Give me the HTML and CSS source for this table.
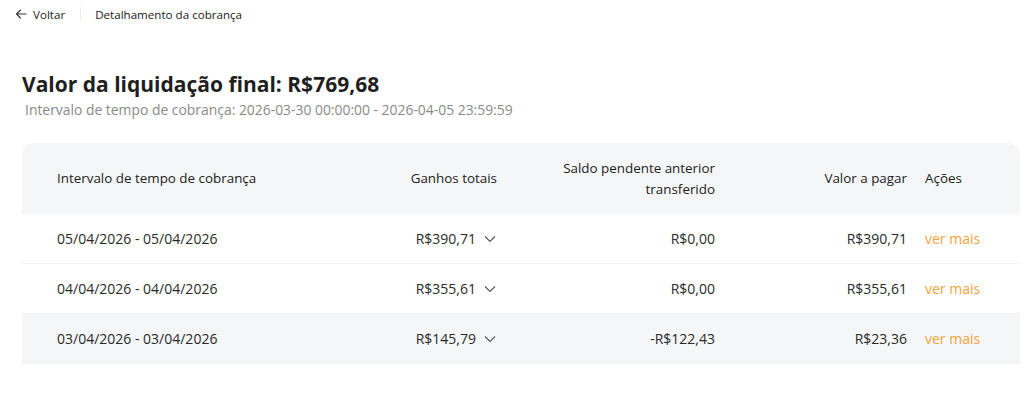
FILE: index.html
```html
<!DOCTYPE html>
<html lang="pt-BR">
<head>
<meta charset="utf-8">
<title>Detalhamento da cobrança</title>
<link rel="stylesheet" href="styles.css">
</head>
<body>
<nav class="topbar">
  <a class="back" href="#">
    <svg class="back-icon" viewBox="0 0 12 12" width="12" height="12" aria-hidden="true"><path d="M11 6H1.5M5.5 2L1.5 6l4 4" fill="none" stroke="#333" stroke-width="1.1" stroke-linecap="round" stroke-linejoin="round"/></svg>
    <span>Voltar</span>
  </a>
  <span class="divider"></span>
  <span class="crumb">Detalhamento da cobrança</span>
</nav>
<main class="content">
  <h1 class="title">Valor da liquidação final: R$769,68</h1>
  <p class="subtitle">Intervalo de tempo de cobrança: 2026-03-30 00:00:00 - 2026-04-05 23:59:59</p>
  <div class="table">
    <div class="row head">
      <div class="c c1">Intervalo de tempo de cobrança</div>
      <div class="c c2">Ganhos totais</div>
      <div class="c c3">Saldo pendente anterior<br>transferido</div>
      <div class="c c4">Valor a pagar</div>
      <div class="c c5">Ações</div>
    </div>
    <div class="row">
      <div class="c c1">05/04/2026 - 05/04/2026</div>
      <div class="c c2"><span>R$390,71</span><svg class="chev" viewBox="0 0 12 8" width="12" height="8"><path d="M1 1.5l5 5 5-5" fill="none" stroke="#555" stroke-width="1.1"/></svg></div>
      <div class="c c3">R$0,00</div>
      <div class="c c4">R$390,71</div>
      <div class="c c5"><a class="more" href="#">ver mais</a></div>
    </div>
    <div class="row">
      <div class="c c1">04/04/2026 - 04/04/2026</div>
      <div class="c c2"><span>R$355,61</span><svg class="chev" viewBox="0 0 12 8" width="12" height="8"><path d="M1 1.5l5 5 5-5" fill="none" stroke="#555" stroke-width="1.1"/></svg></div>
      <div class="c c3">R$0,00</div>
      <div class="c c4">R$355,61</div>
      <div class="c c5"><a class="more" href="#">ver mais</a></div>
    </div>
    <div class="row hover">
      <div class="c c1">03/04/2026 - 03/04/2026</div>
      <div class="c c2"><span>R$145,79</span><svg class="chev" viewBox="0 0 12 8" width="12" height="8"><path d="M1 1.5l5 5 5-5" fill="none" stroke="#555" stroke-width="1.1"/></svg></div>
      <div class="c c3">-R$122,43</div>
      <div class="c c4">R$23,36</div>
      <div class="c c5"><a class="more" href="#">ver mais</a></div>
    </div>
  </div>
</main>
</body>
</html>
```

FILE: styles.css
```css
* { box-sizing: border-box; }
html, body { margin: 0; padding: 0; background: #fff; }
body {
  font-family: "Open Sans", "Liberation Sans", sans-serif;
  color: #222;
  width: 1024px;
  height: 393px;
  overflow: hidden;
}
.topbar {
  height: 28px;
  display: flex;
  align-items: center;
  padding-left: 15px;
  font-size: 11.6px;
}
.back {
  display: flex;
  align-items: center;
  gap: 6px;
  color: #222;
  text-decoration: none;
}
.divider {
  width: 1px;
  height: 14px;
  background: #eee;
  margin: 0 14px 0 15px;
}
.crumb { color: #222; }
.content { padding: 42px 0 0 22px; }
.title {
  margin: 0;
  font-size: 21px;
  font-weight: 700;
  line-height: 28px;
  color: #1f1f1f;
}
.subtitle {
  margin: 2px 0 0 3px;
  font-size: 13.9px;
  color: #8a8a8a;
  line-height: 20px;
}
.table {
  margin-top: 23px;
  width: 998px;
  font-size: 13.5px;
}
.row {
  display: grid;
  grid-template-columns: 310px 165px 218px 192px 113px;
  height: 50px;
  align-items: center;
  border-bottom: 1px solid #f1f2f4;
  color: #2a2a2a;
  font-size: 14px;
}
.row.head {
  height: 71px;
  background: #f5f6f8;
  border-radius: 12px 12px 0 0;
  border-bottom: none;
  color: #222;
  font-size: 13.4px;
}
.row.hover { background: #f5f6f8; }
.c { line-height: 21px; }
.c1 { padding-left: 35px; }
.c2 {
  display: flex;
  justify-content: flex-end;
  align-items: center;
  gap: 8px;
}
.head .c2 { display: block; text-align: right; }
.c3 { text-align: right; }
.c4 { text-align: right; }
.c5 { padding-left: 18px; }
.chev { margin-right: 1px; }
.more { color: #f0a440; text-decoration: none; }
```
